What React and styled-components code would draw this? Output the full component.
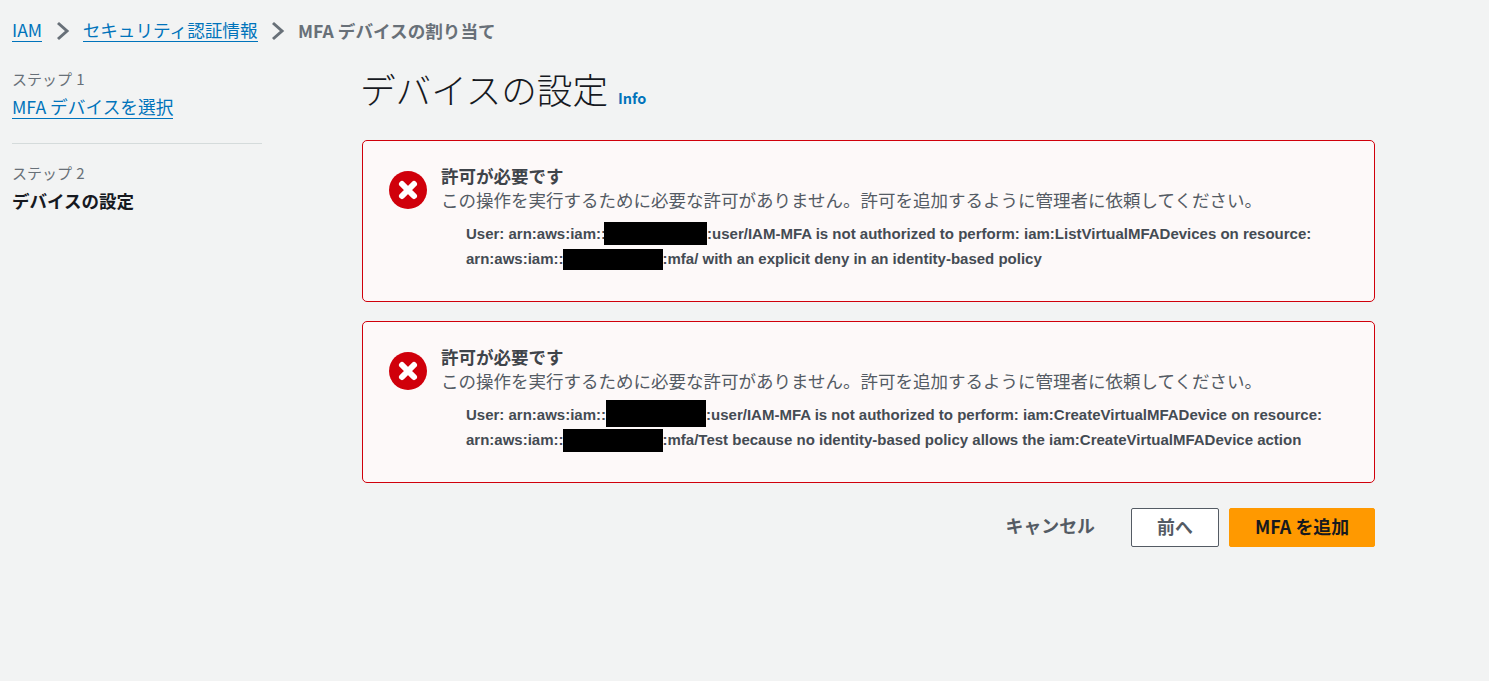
import React from 'react';
import styled, { createGlobalStyle } from 'styled-components';

const GlobalStyle = createGlobalStyle`
  html, body {
    margin: 0;
    padding: 0;
    background: #f2f3f3;
  }
`;

const CJK = `"Noto Sans CJK JP", "Noto Sans", sans-serif`;

const Page = styled.div`
  width: 1489px;
  height: 681px;
  box-sizing: border-box;
  overflow: hidden;
  padding: 19px 114px 0 12px;
  background: #f2f3f3;
  font-family: ${CJK};
  color: #16191f;
`;

const Breadcrumbs = styled.nav`
  display: flex;
  align-items: center;
  height: 24px;
  font-size: 17.6px;
  line-height: 24px;
`;

const Crumb = styled.a`
  color: #0073bb;
  text-decoration: none;
  border-bottom: 1px solid #0073bb;
  height: 22px;
  line-height: 22px;
  margin-bottom: 1px;
`;

const CurrentCrumb = styled.span`
  color: #687078;
  font-weight: 700;
`;

const Chevron = styled.svg`
  width: 14px;
  height: 20px;
  margin: 0 13px 0 13.5px;
  fill: none;
  stroke: #687078;
  stroke-width: 3;
`;

const Body = styled.div`
  display: flex;
  margin-top: 20px;
`;

const Sidebar = styled.aside`
  width: 250px;
  flex: none;
  margin-right: 100px;
`;

const Step = styled.div`
  padding-top: ${(p) => p.$top || 0}px;
  padding-bottom: ${(p) => p.$bottom || 0}px;
  border-bottom: ${(p) => (p.$divided ? '1px solid #d5dbdb' : 'none')};
`;

const StepLabel = styled.div`
  font-size: 15px;
  line-height: 22px;
  word-spacing: 1px;
  color: #687078;
`;

const StepLink = styled.a`
  display: inline-block;
  font-size: 17.7px;
  line-height: 23px;
  margin-top: 5px;
  color: #0073bb;
  border-bottom: 1px solid #0073bb;
`;

const StepCurrent = styled.div`
  font-size: 17.5px;
  line-height: 24px;
  margin-top: 5px;
  font-weight: 700;
  color: #16191f;
`;

const Main = styled.main`
  width: 1013px;
  flex: none;
`;

const TitleRow = styled.div`
  display: flex;
  align-items: baseline;
  height: 54px;
  margin-top: 4px;
`;

const Title = styled.h1`
  margin: 0 0 0 -2px;
  font-size: 35.6px;
  line-height: 44px;
  font-weight: 300;
  color: #16191f;
`;

const Info = styled.a`
  margin-left: 10px;
  font-size: 14.5px;
  font-weight: 700;
  color: #0073bb;
`;

const Alert = styled.section`
  box-sizing: border-box;
  display: flex;
  height: 162px;
  margin-top: 19px;
  padding: 24px 0 0 26px;
  border: 1px solid #d0000b;
  border-radius: 5px;
  background: #fdf9f9;
  color: #444b53;
`;

const AlertIcon = styled.svg`
  width: 38px;
  height: 38px;
  flex: none;
  margin: 6px 14px 0 0;
`;

const AlertText = styled.div`
  flex: 1;
`;

const AlertTitle = styled.div`
  font-size: 17.5px;
  line-height: 22px;
  font-weight: 700;
  color: #3f444a;
`;

const AlertMessage = styled.div`
  font-size: 17.5px;
  line-height: 24px;
  margin-top: 1px;
  color: #545b64;
`;

const Detail = styled.div`
  margin: 9px 0 0 25px;
  font-family: "Liberation Sans", Arial, sans-serif;
  font-size: 15px;
  font-weight: 700;
  color: #444b53;
`;

const DetailLine = styled.div`
  height: 25px;
  line-height: 25px;
  white-space: nowrap;
`;

// the negative top margin keeps the black bar from growing the line box
const Redacted = styled.span`
  display: inline-block;
  width: ${(p) => p.$width}px;
  height: ${(p) => p.$height}px;
  margin-top: -12px;
  margin-left: ${(p) => p.$left || 0}px;
  vertical-align: ${(p) => p.$drop}px;
  background: #000;
`;

const Actions = styled.div`
  display: flex;
  justify-content: flex-end;
  align-items: center;
  margin-top: 25px;
`;

const TextButton = styled.button`
  height: 39px;
  padding: 0 0 5px;
  margin-right: 36px;
  border: 0;
  background: none;
  font: 700 17.9px ${CJK};
  color: #545b64;
`;

const Button = styled.button`
  box-sizing: border-box;
  height: 39px;
  padding: 0 0 3px;
  width: ${(p) => p.$width}px;
  margin-left: ${(p) => p.$left || 0}px;
  border: 1px solid ${(p) => (p.$primary ? '#ff9900' : '#545b64')};
  border-radius: 2px;
  background: ${(p) => (p.$primary ? '#ff9900' : '#fff')};
  font: 700 17.9px ${CJK};
  color: ${(p) => (p.$primary ? '#16191f' : '#545b64')};
`;

const ErrorIcon = () => (
  <AlertIcon viewBox="0 0 38 38">
    <circle cx="19" cy="19" r="19" fill="#d0000b" />
    <path d="M13 13l12 12M25 13l-12 12" stroke="#fff" strokeWidth="6" strokeLinecap="round" />
  </AlertIcon>
);

const Separator = () => (
  <Chevron viewBox="0 0 14 20">
    <path d="M2 2l9 8-9 8" />
  </Chevron>
);

const MESSAGE = 'この操作を実行するために必要な許可がありません。許可を追加するように管理者に依頼してください。';

const App = () => (
  <Page>
    <GlobalStyle />
    <Breadcrumbs>
      <Crumb>IAM</Crumb>
      <Separator />
      <Crumb>セキュリティ認証情報</Crumb>
      <Separator />
      <CurrentCrumb>MFA デバイスの割り当て</CurrentCrumb>
    </Breadcrumbs>
    <Body>
      <Sidebar>
        <Step $top={5} $bottom={24} $divided>
          <StepLabel>ステップ 1</StepLabel>
          <StepLink>MFA デバイスを選択</StepLink>
        </Step>
        <Step $top={18}>
          <StepLabel>ステップ 2</StepLabel>
          <StepCurrent>デバイスの設定</StepCurrent>
        </Step>
      </Sidebar>
      <Main>
        <TitleRow>
          <Title>デバイスの設定</Title>
          <Info>Info</Info>
        </TitleRow>
        <Alert>
          <ErrorIcon />
          <AlertText>
            <AlertTitle>許可が必要です</AlertTitle>
            <AlertMessage>{MESSAGE}</AlertMessage>
            <Detail>
              <DetailLine>
                User: arn:aws:iam::<Redacted $left={-2} $width={103} $height={23} $drop={-6} />:user/IAM-MFA is not authorized to perform: iam:ListVirtualMFADevices on resource:
              </DetailLine>
              <DetailLine>
                arn:aws:iam::<Redacted $left={-1} $width={100} $height={21} $drop={-6} />:mfa/ with an explicit deny in an identity-based policy
              </DetailLine>
            </Detail>
          </AlertText>
        </Alert>
        <Alert>
          <ErrorIcon />
          <AlertText>
            <AlertTitle>許可が必要です</AlertTitle>
            <AlertMessage>{MESSAGE}</AlertMessage>
            <Detail>
              <DetailLine>
                User: arn:aws:iam::<Redacted $width={100} $height={27} $drop={-7} />:user/IAM-MFA is not authorized to perform: iam:CreateVirtualMFADevice on resource:
              </DetailLine>
              <DetailLine>
                arn:aws:iam::<Redacted $left={-1} $width={100} $height={23} $drop={-7} />:mfa/Test because no identity-based policy allows the iam:CreateVirtualMFADevice action
              </DetailLine>
            </Detail>
          </AlertText>
        </Alert>
        <Actions>
          <TextButton>キャンセル</TextButton>
          <Button $width={88}>前へ</Button>
          <Button $width={146} $left={10} $primary>MFA を追加</Button>
        </Actions>
      </Main>
    </Body>
  </Page>
);

export default App;
